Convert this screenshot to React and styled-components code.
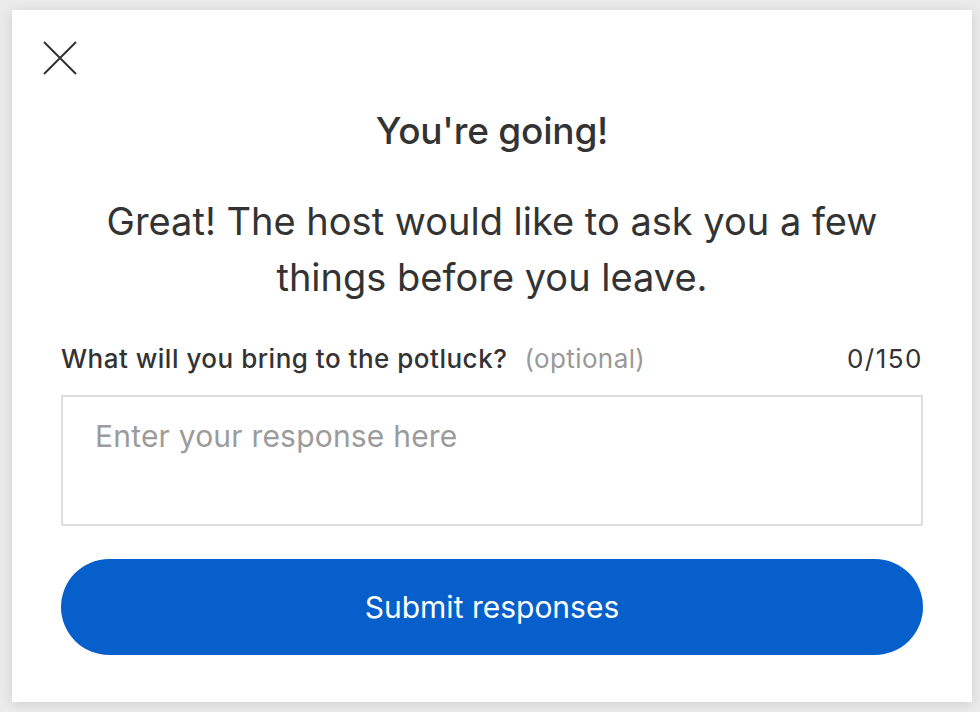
import React, { useState } from 'react';
import styled, { createGlobalStyle } from 'styled-components';

const GlobalStyle = createGlobalStyle`
  html, body {
    margin: 0;
    padding: 0;
    background: #ebebeb;
    font-family: Inter, "Noto Sans", sans-serif;
    color: #333;
  }
  * { box-sizing: border-box; }
`;

const Backdrop = styled.div`
  width: 980px;
  height: 712px;
  padding: 10px 8px 10px 12px;
  background: #ebebeb;
`;

const Modal = styled.div`
  position: relative;
  width: 960px;
  height: 692px;
  background: #fff;
  box-shadow: 0 2px 12px rgba(0, 0, 0, 0.12);
  padding: 99px 49px 0 49px;
  display: flex;
  flex-direction: column;
`;

const CloseButton = styled.button`
  position: absolute;
  top: 31px;
  left: 31px;
  width: 34px;
  height: 34px;
  padding: 0;
  border: none;
  background: transparent;
  cursor: pointer;
  display: flex;
  align-items: center;
  justify-content: center;
`;

const Title = styled.h2`
  margin: 0;
  text-align: center;
  font-size: 37px;
  line-height: 44px;
  font-weight: 500;
  color: #333;
  letter-spacing: -0.2px;
`;

const Intro = styled.p`
  margin: 40px 0 0 0;
  text-align: center;
  font-size: 38px;
  line-height: 56px;
  font-weight: 400;
  color: #333;
`;

const LabelRow = styled.div`
  display: flex;
  align-items: baseline;
  margin-top: 38px;
  line-height: 32px;
`;

const Label = styled.label`
  font-size: 26px;
  font-weight: 500;
  color: #333;
  letter-spacing: 0.5px;
`;

const Optional = styled.span`
  margin-left: 17px;
  font-size: 26px;
  color: #999;
  letter-spacing: 0.4px;
`;

const Counter = styled.span`
  margin-left: auto;
  font-size: 26px;
  color: #333;
  letter-spacing: 1.5px;
`;

const TextArea = styled.textarea`
  margin-top: 20px;
  width: 100%;
  height: 131px;
  resize: none;
  border: 2px solid #dedede;
  padding: 21px 32px;
  font-family: inherit;
  font-size: 30px;
  color: #333;
  outline: none;
  letter-spacing: 0.2px;
  &::placeholder {
    color: #9b9b9b;
  }
`;

const SubmitButton = styled.button`
  margin-top: 33px;
  width: 100%;
  height: 96px;
  border: none;
  border-radius: 48px;
  background: #065fcb;
  color: #fff;
  font-family: inherit;
  font-size: 30px;
  font-weight: 400;
  cursor: pointer;
`;

export default function App() {
  const [value, setValue] = useState('');
  return (
    <>
      <GlobalStyle />
      <Backdrop>
        <Modal>
          <CloseButton aria-label="Close">
            <svg width="34" height="34" viewBox="0 0 34 34" fill="none" stroke="#333" strokeWidth="2">
              <path d="M1 1 L33 33 M33 1 L1 33" />
            </svg>
          </CloseButton>
          <Title>You're going!</Title>
          <Intro>
            Great! The host would like to ask you a few
            <br />
            things before you leave.
          </Intro>
          <LabelRow>
            <Label htmlFor="potluck">What will you bring to the potluck?</Label>
            <Optional>(optional)</Optional>
            <Counter>{value.length}/150</Counter>
          </LabelRow>
          <TextArea
            id="potluck"
            maxLength={150}
            placeholder="Enter your response here"
            value={value}
            onChange={(e) => setValue(e.target.value)}
          />
          <SubmitButton>Submit responses</SubmitButton>
        </Modal>
      </Backdrop>
    </>
  );
}
